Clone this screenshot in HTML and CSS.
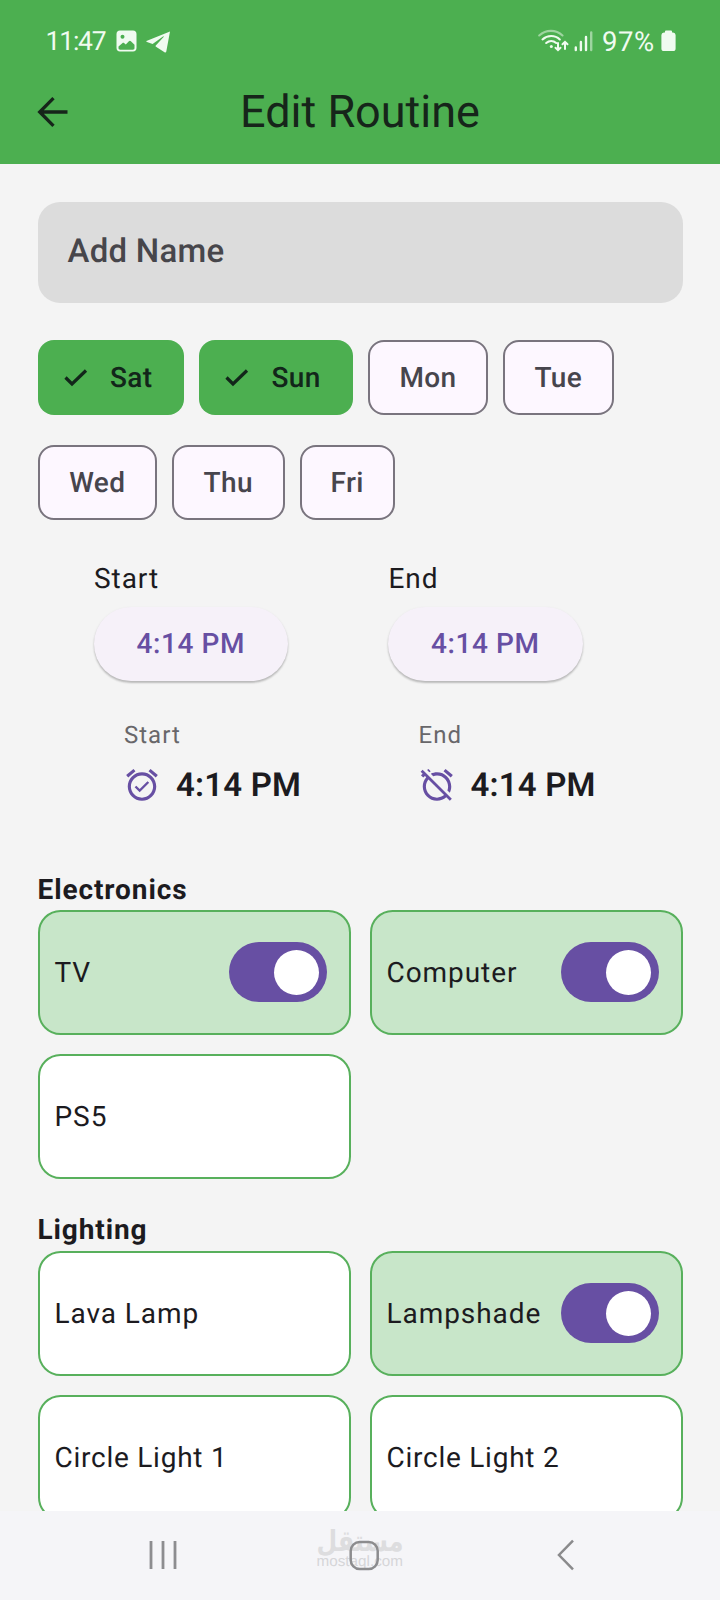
FILE: index.html
```html
<!DOCTYPE html>
<html lang="en">
<head>
<meta charset="utf-8">
<title>Edit Routine</title>
<link rel="stylesheet" href="styles.css">
</head>
<body>
<div class="screen">
  <header class="header">
    <div class="status">
      <span class="clock">11:47</span>
      <svg class="pic" width="21" height="22" viewBox="0 0 21 22"><path fill-rule="evenodd" fill="#f0fbf0" d="M4 .5h13A3.600 3.600 0 0 1 20.500 4v14a3.600 3.600 0 0 1-3.500 3.500H4A3.600 3.600 0 0 1 .5 18V4A3.600 3.600 0 0 1 4 .5zM6.500 4.800a2 2 0 1 0 0 4 2 2 0 0 0 0-4zM2.500 16.500V18c0 1 .6 1.700 1.700 1.700h12.600c1.100 0 1.700-.7 1.700-1.700v-3.200l-3.600-3.600c-.7-.7-1.300-.7-2 0l-3.100 3.300-1.500-1.300c-.7-.6-1.300-.6-2 0z"/></svg>
      <svg class="plane" width="25" height="22" viewBox="0 0 25 22"><path fill="#f0fbf0" d="M24 .4 1 9.700c-.9.4-.9 1 0 1.300l5.600 1.900L17 5.500c.6-.4 1 0 .6.4L9.800 14.500c-.4.5-.3 1 .2 1.300l8.500 5.500c.9.5 1.600.2 1.800-.8z"/></svg>
      <span class="grow"></span>
      <svg class="wifi" width="31" height="24" viewBox="0 0 31 24" fill="none" stroke="#f0fbf0" stroke-width="2.100" stroke-linecap="round"><path opacity=".5" d="M1.200 6.500C8 .3 18 .3 24.500 6.500"/><path d="M4.500 10.400c5-4.600 12.500-4.600 17.300 0M8.200 14c3-2.600 7-2.600 10 0"/><circle cx="13.300" cy="17.600" r="1.500" fill="#f0fbf0" stroke="none"/><path stroke-width="2" d="M20 14v7M17.500 18.700l2.500 2.500 2.500-2.500M27 20v-7M24.500 15.300l2.500-2.500 2.500 2.500"/></svg>
      <svg class="signal" width="19" height="21" viewBox="0 0 19 21" stroke="#f0fbf0" stroke-width="2.400" stroke-linecap="round"><path d="M1.800 16.500v2.500M6.900 11v8M12 6v13"/><path opacity=".5" d="M17.200 1.500V19"/></svg>
      <span class="percent">97%</span>
      <svg class="battery" width="15" height="22" viewBox="0 0 15 22"><path fill="#f0fbf0" d="M5 .5h5a1 1 0 0 1 1 1v1h1A2.600 2.600 0 0 1 14.600 5v13.500a2.600 2.600 0 0 1-2.600 2.600H3A2.600 2.600 0 0 1 .4 18.500V5A2.600 2.600 0 0 1 3 2.500h1v-1a1 1 0 0 1 1-1z"/></svg>
    </div>
    <div class="appbar">
      <svg class="back" width="32" height="32" viewBox="0 0 32 32" fill="none" stroke="#16251a" stroke-width="3.300"><path d="M17.500 2.200 3.700 16l13.800 13.800M3.700 16H31.500"/></svg>
      <h1 class="title">Edit Routine</h1>
    </div>
  </header>

  <main class="content">
    <div class="field">Add Name</div>

    <div class="days">
      <div class="chip on sat"><svg width="26" height="20" viewBox="0 0 26 20"><path d="M2.500 9.500 9 16 23 2.500"/></svg><span>Sat</span></div>
      <div class="chip on sun"><svg width="26" height="20" viewBox="0 0 26 20"><path d="M2.500 9.500 9 16 23 2.500"/></svg><span>Sun</span></div>
      <div class="chip mon">Mon</div>
      <div class="chip tue">Tue</div>
      <div class="chip wed">Wed</div>
      <div class="chip thu">Thu</div>
      <div class="chip fri">Fri</div>
    </div>

    <section class="times">
      <div class="time">
        <div class="label">Start</div>
        <div class="pill">4:14 PM</div>
        <div class="summary">
          <div class="caption">Start</div>
          <div class="value">
            <svg width="38" height="38" viewBox="0 0 24 24" fill="#674fa3"><path d="M22 5.720l-4.600-3.860-1.290 1.530 4.600 3.860L22 5.720zM7.880 3.390L6.600 1.860 2 5.710l1.290 1.530 4.590-3.850zM12 4c-4.970 0-9 4.030-9 9s4.020 9 9 9c4.970 0 9-4.030 9-9s-4.030-9-9-9zm0 16c-3.870 0-7-3.130-7-7s3.130-7 7-7 7 3.130 7 7-3.130 7-7 7zm-1.460-5.470L8.410 12.400l-1.060 1.060 3.180 3.180 6-6-1.060-1.060-4.930 4.950z"/></svg>
            <span>4:14 PM</span>
          </div>
        </div>
      </div>
      <div class="time">
        <div class="label">End</div>
        <div class="pill">4:14 PM</div>
        <div class="summary">
          <div class="caption">End</div>
          <div class="value">
            <svg width="38" height="38" viewBox="0 0 24 24" fill="#674fa3"><path d="M12 6c3.870 0 7 3.130 7 7 0 .84-.16 1.650-.43 2.400l1.520 1.520c.58-1.190.91-2.510.91-3.920 0-4.970-4.030-9-9-9-1.410 0-2.730.33-3.920.91L9.600 6.430C10.350 6.160 11.160 6 12 6zm10-.28l-4.600-3.860-1.290 1.530 4.600 3.860L22 5.720zM2.920 2.290L1.650 3.570 2.980 4.900l-1.110.93 1.420 1.420 1.110-.94.8.8C3.830 8.690 3 10.750 3 13c0 4.970 4.020 9 9 9 2.250 0 4.310-.83 5.890-2.200l2.200 2.200 1.270-1.270L3.890 3.270l-.97-.98zm13.550 16.100C15.260 19.390 13.700 20 12 20c-3.870 0-7-3.130-7-7 0-1.700.61-3.260 1.610-4.470l9.860 9.860zM8.020 3.280L6.600 1.860l-.86.71 1.420 1.420.86-.71z"/></svg>
            <span>4:14 PM</span>
          </div>
        </div>
      </div>
    </section>

    <h2 class="heading electronics">Electronics</h2>
    <div class="cards">
      <div class="card active">TV<span class="switch"></span></div>
      <div class="card active">Computer<span class="switch"></span></div>
      <div class="card">PS5</div>
    </div>

    <h2 class="heading lighting">Lighting</h2>
    <div class="cards">
      <div class="card">Lava Lamp</div>
      <div class="card active">Lampshade<span class="switch"></span></div>
      <div class="card numbered">Circle Light 1</div>
      <div class="card numbered">Circle Light 2</div>
    </div>
  </main>

  <nav class="nav">
    <svg class="recents" width="28" height="30" viewBox="0 0 28 30" stroke="#8d8d90" stroke-width="2.800"><path d="M2 1v28M14 1v28M26 1v28"/></svg>
    <div class="home">
      <svg width="90" height="64" viewBox="0 -12 90 64">
        <text class="mark-ar" x="45" y="28" text-anchor="middle" textLength="87" lengthAdjust="spacingAndGlyphs">مستقل</text>
        <text class="mark-en" x="1.500" y="43" textLength="86.500" lengthAdjust="spacingAndGlyphs">mostaql.com</text>
        <rect x="35.700" y="19" width="27" height="27" rx="9" fill="none" stroke="#8c8c8e" stroke-width="2.500"/>
      </svg>
    </div>
    <svg class="prev" width="18" height="32" viewBox="0 0 18 32" fill="none" stroke="#8a8a8c" stroke-width="2.500"><path d="M16 1.700 2 16l14 14.300"/></svg>
  </nav>
</div>
</body>
</html>
```
FILE: styles.css
```css
* { box-sizing: border-box; }

body {
  margin: 0;
  background: #f4f4f4;
  font-family: Roboto, "Liberation Sans", sans-serif;
  color: #1c1b1f;
  text-rendering: geometricPrecision;
}

.screen {
  width: 720px;
  height: 1600px;
  display: flex;
  flex-direction: column;
  overflow: hidden;
}

.header {
  height: 163.5px;
  flex: none;
  background: #4caf50;
}

.status {
  height: 82px;
  padding: 0 44.5px 0 45.5px;
  display: flex;
  align-items: center;
  color: #f0fbf0;
  font-size: 26.5px;
  line-height: 30px;
}

.status svg { flex: none; }
.clock { width: 70.5px; padding-top: 1px; letter-spacing: -1.2px; }
.pic { margin-right: 9px; }
.plane { margin-top: 2px; }
.grow { flex: 1; }
.wifi { margin-right: 5px; }
.signal { margin-right: 9px; }
.percent { width: 58.5px; padding-top: 1px; font-size: 27.5px; letter-spacing: .5px; }
.battery { margin-bottom: 1px; }

.appbar {
  height: 59px;
  padding: 0 36px;
  display: grid;
  grid-template-columns: 32px 1fr 32px;
  align-items: center;
  color: #16251a;
}

.title {
  margin: 0;
  text-align: center;
  font-size: 45px;
  font-weight: 400;
  line-height: 59px;
  white-space: nowrap;
}

.content {
  flex: 1;
  min-height: 0;
  overflow: hidden;
  padding: 38px 37.5px 0;
}

.field {
  height: 101px;
  padding-left: 30px;
  border-radius: 22px;
  background: #dcdcdc;
  color: #47464b;
  font-size: 33px;
  font-weight: 500;
  letter-spacing: .25px;
  line-height: 100px;
}

.days {
  margin-top: 37.5px;
  display: flex;
  flex-wrap: wrap;
  gap: 30px 15px;
}

.chip {
  height: 75px;
  display: flex;
  align-items: center;
  justify-content: center;
  border: 2px solid #79747e;
  border-radius: 16px;
  background: #fdf7ff;
  color: #47454d;
  font-size: 28px;
  font-weight: 500;
  letter-spacing: .4px;
}

.chip.on {
  justify-content: flex-start;
  padding-left: 25px;
  gap: 21.5px;
  border: 0;
  background: #4caf50;
  color: #12261a;
}

.chip svg {
  flex: none;
  fill: none;
  stroke: #12261a;
  stroke-width: 3.2;
}

.sat { width: 146.5px; }
.sun { width: 154px; }
.mon { width: 120px; }
.tue { width: 110.5px; margin-right: 60px; }
.wed { width: 119.5px; }
.thu { width: 112.5px; }
.fri { width: 95.5px; }

.times {
  margin: 38px 0 0 56px;
  display: grid;
  grid-template-columns: 294.5px 294.5px;
}

.label {
  padding: 1px 0 0 .5px;
  font-size: 28px;
  letter-spacing: .94px;
  line-height: 40px;
}

.pill {
  width: 194.5px;
  height: 74px;
  margin-top: 8px;
  border-radius: 37px;
  background: #f6f1f9;
  box-shadow: 0 2px 2px rgba(0, 0, 0, .2), 0 1px 3px rgba(0, 0, 0, .08);
  color: #674fa3;
  font-size: 28px;
  font-weight: 500;
  letter-spacing: .6px;
  line-height: 74px;
  text-align: center;
}

.summary { padding: 33px 0 0 29.5px; }

.caption {
  padding: 1px 0 0 1px;
  color: #68676a;
  font-size: 24px;
  letter-spacing: 1px;
  line-height: 40px;
}

.value {
  height: 38px;
  margin-top: 11px;
  display: flex;
  align-items: center;
  gap: 15px;
  font-size: 33px;
  font-weight: 600;
  letter-spacing: .2px;
  line-height: 38px;
}

.value span { padding-top: 1px; }

.heading {
  margin: 0;
  font-size: 28px;
  font-weight: 700;
  letter-spacing: .9px;
  line-height: 40px;
}

.electronics { margin-top: 65.5px; }
.lighting { margin: 31px 0 1px; }

.cards {
  display: grid;
  grid-template-columns: 313px 313px;
  grid-auto-rows: 125px;
  gap: 19px;
}

.card {
  display: flex;
  align-items: center;
  justify-content: space-between;
  padding: 0 22px 0 15px;
  border: 2px solid #58b05c;
  border-radius: 22.5px;
  background: #fff;
  font-size: 28px;
  letter-spacing: .94px;
  white-space: nowrap;
}

.card.active { background: #c8e6c9; }
.card.numbered { letter-spacing: .75px; }

.switch {
  width: 97.5px;
  height: 60px;
  flex: none;
  display: flex;
  align-items: center;
  justify-content: flex-end;
  padding-right: 7.5px;
  border-radius: 30px;
  background: #674fa3;
}

.switch::after {
  content: "";
  width: 45px;
  height: 45px;
  border-radius: 50%;
  background: #fff;
}

.nav {
  height: 89.5px;
  flex: none;
  display: flex;
  align-items: flex-start;
  justify-content: space-between;
  padding: 0 145px 0 148.5px;
  background: #f5f5f8;
}

.recents { margin-top: 29.5px; }
.home { width: 90px; height: 64px; margin-right: 14px; }
.prev { margin-top: 28.5px; }

.mark-ar {
  font: 700 29px "DejaVu Sans", sans-serif;
  fill: #dddddf;
}

.mark-en {
  font: 500 15px "Liberation Sans", sans-serif;
  fill: #d6d6d8;
}
```
